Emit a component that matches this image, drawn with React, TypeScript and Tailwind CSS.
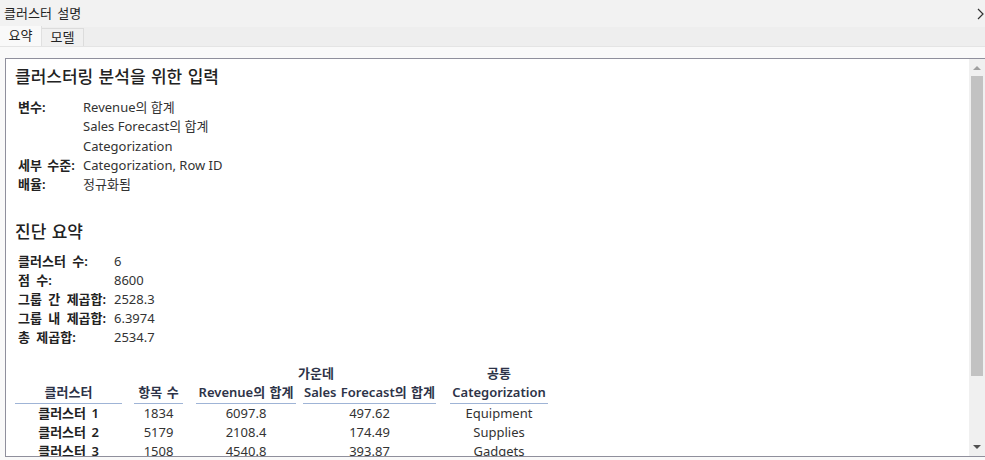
import React from 'react';

const FONT = { fontFamily: '"Noto Sans", "Noto Sans CJK KR", sans-serif' };

const inputs: [string, string[]][] = [
  ['변수:', ['Revenue의 합계', 'Sales Forecast의 합계', 'Categorization']],
  ['세부 수준:', ['Categorization, Row ID']],
  ['배율:', ['정규화됨']],
];

const stats: [string, string][] = [
  ['클러스터 수:', '6'],
  ['점 수:', '8600'],
  ['그룹 간 제곱합:', '2528.3'],
  ['그룹 내 제곱합:', '6.3974'],
  ['총 제곱합:', '2534.7'],
];

const rows = [
  ['클러스터 1', '1834', '6097.8', '497.62', 'Equipment'],
  ['클러스터 2', '5179', '2108.4', '174.49', 'Supplies'],
  ['클러스터 3', '1508', '4540.8', '393.87', 'Gadgets'],
];

const cols = ['w-[107px]', 'w-[49px] ml-[12px]', 'w-[100px] ml-[13px]', 'w-[133px] ml-[7px]', 'w-[98px] ml-[14px]'];
const heads = ['클러스터', '항목 수', 'Revenue의 합계', 'Sales Forecast의 합계', 'Categorization'];

export default function App() {
  return (
    <div className="w-[985px] h-[460px] bg-[#f9f9f9] flex flex-col overflow-hidden text-[#333]" style={FONT}>
      <div className="h-[27px] bg-[#f2f2f2] flex items-center justify-between pl-[4px] pr-[1px]">
        <span className="text-[13px] text-[#222] [word-spacing:2px]">클러스터 설명</span>
        <svg width="7" height="12" viewBox="0 0 7 12" fill="none" stroke="#333" strokeWidth="1.2">
          <path d="M1 1l5 5-5 5" />
        </svg>
      </div>
      <div className="h-[20px] bg-[#eeeeee] flex items-end border-b border-[#e4e4e4]">
        <div className="h-[20px] w-[42px] bg-[#f9f9f9] flex items-center justify-center text-[13px] text-[#222] border-r border-[#e0e0e0]">요약</div>
        <div className="h-[18px] w-[42px] bg-[#f0f0f0] flex items-center justify-center text-[13px] text-[#222] border-r border-t border-[#dcdcdc]">모델</div>
      </div>
      <div className="h-[11px]" />
      <div className="flex-1 ml-[5px] mb-[3px] border-l border-t border-b border-[#8f8f9c] bg-white flex min-h-0">
        <div className="flex-1 overflow-hidden pl-[9px] pt-[7px] text-[13px]">
          <div className="text-[17px] leading-[22px] font-medium text-[#222] [word-spacing:1px]">클러스터링 분석을 위한 입력</div>
          <div className="mt-[10px] pl-[3px] leading-[19.3px]">
            {inputs.map(([label, vals]) => (
              <div key={label} className="flex">
                <div className="w-[65px] font-semibold text-[#222] whitespace-nowrap [word-spacing:2px]">{label}</div>
                <div>
                  {vals.map((v) => (
                    <div key={v}>{v}</div>
                  ))}
                </div>
              </div>
            ))}
          </div>

          <div className="mt-[27px] text-[17px] leading-[22px] font-medium text-[#222] [word-spacing:1px]">진단 요약</div>
          <div className="mt-[9px] pl-[3px] leading-[19px]">
            {stats.map(([label, v]) => (
              <div key={label} className="flex">
                <div className="w-[96px] font-semibold text-[#222] whitespace-nowrap [word-spacing:3px]">{label}</div>
                <div>{v}</div>
              </div>
            ))}
          </div>

          <div className="mt-[17px] leading-[19px]">
            <div className="flex font-semibold text-[#2d3348]">
              <div className="w-[181px]" />
              <div className="w-[240px] text-center">가운데</div>
              <div className="w-[98px] ml-[14px] text-center">공통</div>
            </div>
            <div className="flex font-semibold text-[#2d3348]">
              {heads.map((h, i) => (
                <div key={h} className={`${cols[i]} text-center whitespace-nowrap border-b border-[#9fb4d6] pb-[1px] [word-spacing:1px]`}>{h}</div>
              ))}
            </div>
            {rows.map((r) => (
              <div key={r[0]} className="flex">
                {r.map((c, i) => (
                  <div key={i} className={`${cols[i]} text-center whitespace-nowrap ${i === 0 ? 'font-semibold text-[#222] [word-spacing:2px]' : ''}`}>{c}</div>
                ))}
              </div>
            ))}
          </div>
        </div>
        <div className="w-[16px] bg-[#f0f0f0] flex flex-col items-center">
          <div className="h-[16px] flex items-center justify-center mt-[1px]">
            <div className="w-0 h-0 border-l-[4px] border-r-[4px] border-b-[4px] border-l-transparent border-r-transparent border-b-[#a0a0a0]" />
          </div>
          <div className="w-[12px] h-[300px] bg-[#c2c2c2]" />
          <div className="flex-1" />
          <div className="h-[16px] flex items-center justify-center mb-[1px]">
            <div className="w-0 h-0 border-l-[4px] border-r-[4px] border-t-[4px] border-l-transparent border-r-transparent border-t-[#505050]" />
          </div>
        </div>
      </div>
    </div>
  );
}
